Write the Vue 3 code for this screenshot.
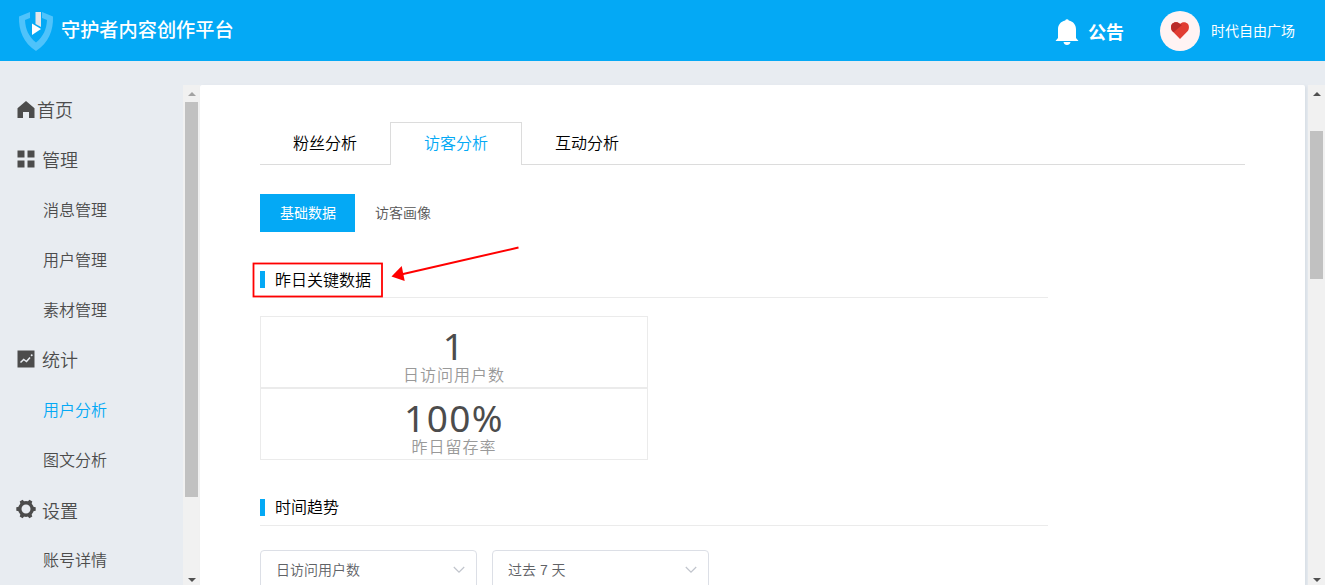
<script setup>
const menu = [
  { label: '首页', icon: 'home' },
  { label: '管理', icon: 'grid' },
  { label: '消息管理' },
  { label: '用户管理' },
  { label: '素材管理' },
  { label: '统计', icon: 'chart' },
  { label: '用户分析', active: true },
  { label: '图文分析' },
  { label: '设置', icon: 'gear' },
  { label: '账号详情' },
]
const tabs = ['粉丝分析', '访客分析', '互动分析']
const stats = [
  { value: '1', label: '日访问用户数' },
  { value: '100%', label: '昨日留存率' },
]
const selects = ['日访问用户数', '过去 7 天']
</script>

<template>
  <div class="page">
    <header class="header">
      <svg class="logo" width="36" height="42" viewBox="0 0 36 42">
        <path fill="#4fc3fb" d="M1 6.500 12 2v6L7 10c.4 9 3.600 16.500 11 22.500C25.400 26.500 28.600 19 29 10l-5-2V2l11 4.500c.5 14-4.500 26.500-17 34.500C5.500 33 .5 20.500 1 6.500z" />
        <path fill="#e3e6ea" d="M17.500 2h5.500v15l-5.500-3z" />
        <path fill="#fff" d="M14 13.500 23 19l-9 6z" />
      </svg>
      <h1 class="title">守护者内容创作平台</h1>
      <div class="notice">
        <svg width="24" height="28" viewBox="0 0 24 28">
          <path fill="#fff" d="M10.200 2.500a1.900 1.900 0 0 1 3.600 0C18.500 3.500 21 7 21 11.500V20l2.500 3H.5L3 20v-8.500C3 7 5.500 3.500 10.200 2.500zM8.500 24h7c-.3 2-1.700 3-3.500 3s-3.200-1-3.500-3z" />
        </svg>
        <span>公告</span>
      </div>
      <div class="avatar">
        <svg width="18" height="17" viewBox="0 0 18 17">
          <path fill="#e13c32" d="M9 17 1.200 9C-.3 7.200-.3 3.500 1.200 1.800 3-.3 7-.5 9 2c2-2.500 6-2.300 7.800-.2 1.500 1.700 1.500 5.400 0 7.200z" />
          <path fill="#b92a29" d="M1.200 9C-.3 7.200-.3 3.500 1.200 1.800 3-.3 7-.5 9 2l2 1-7 6-1.500 1.300z" />
        </svg>
      </div>
      <span class="user">时代自由广场</span>
    </header>

    <div class="body">
      <nav class="side">
        <div v-for="m in menu" :key="m.label" class="item" :class="[m.icon ? 'group' : 'sub', m.icon, { active: m.active }]">
          <svg v-if="m.icon === 'home'" width="18" height="17" viewBox="0 0 18 17">
            <path d="M9 0 .5 7.300V17H6v-6h6v6h5.500V7.300z" />
          </svg>
          <svg v-else-if="m.icon === 'grid'" width="18" height="18" viewBox="0 0 18 18">
            <path d="M.5.500h7v7h-7zM10.500.500h7v7h-7zM.5 10.500h7v7h-7zM10.500 10.500h7v7h-7z" />
          </svg>
          <svg v-else-if="m.icon === 'chart'" width="18" height="18" viewBox="0 0 18 18">
            <path d="M.5.500h17v17H.5z" />
            <path class="line" d="m3.500 12.500 3.200-3 2.800 2L13 7.500" />
            <circle class="dot" cx="14.700" cy="5.200" r="1" />
          </svg>
          <svg v-else-if="m.icon === 'gear'" width="20" height="20" viewBox="0 0 20 20">
            <circle class="ring" cx="10" cy="10" r="6.200" />
            <path v-for="a in 6" :key="a" d="M8.300.300h3.400l.7 4.200H7.600z" :transform="`rotate(${a * 60 + 30} 10 10)`" />
          </svg>
          <span>{{ m.label }}</span>
        </div>
      </nav>
      <div class="bar side-bar">
        <i class="up faded"></i>
        <b class="thumb"></b>
        <i class="down"></i>
      </div>

      <main class="panel">
        <div class="tabs">
          <div v-for="(t, i) in tabs" :key="t" class="tab" :class="{ on: i === 1 }">{{ t }}</div>
        </div>
        <div class="subtabs">
          <div class="subtab on">基础数据</div>
          <div class="subtab">访客画像</div>
        </div>

        <section class="section first">
          <h2>昨日关键数据</h2>
          <svg class="mark" width="270" height="56" viewBox="0 0 270 56">
            <rect x="2.500" y="18.500" width="128.500" height="33" fill="none" stroke="#f00" stroke-width="1.800" />
            <path d="M267.500 2.500 150 29.500" stroke="#f00" stroke-width="2" />
            <path d="m140.500 31.500 10.200-10.500 3 15z" fill="#f00" />
          </svg>
        </section>
        <div class="stats">
          <div v-for="s in stats" :key="s.label" class="stat">
            <div class="num">{{ s.value }}</div>
            <div class="cap">{{ s.label }}</div>
          </div>
        </div>

        <section class="section second">
          <h2>时间趋势</h2>
        </section>
        <div class="selects">
          <div v-for="s in selects" :key="s" class="select">
            <span>{{ s }}</span>
            <svg width="12" height="8" viewBox="0 0 12 8"><path d="m.8 1 5.200 5.200L11.200 1" fill="none" stroke="#c0c4cc" stroke-width="1.200" /></svg>
          </div>
        </div>
      </main>

      <div class="bar main-bar">
        <i class="up"></i>
        <b class="thumb"></b>
        <i class="down"></i>
      </div>
    </div>
  </div>
</template>

<style>
html, body { margin: 0; overflow: hidden; }
</style>

<style scoped>
.page {
  width: 1325px; height: 585px; overflow: hidden;
  display: flex; flex-direction: column;
  background: #e8ecf1; color: #4c4c4c;
  font-family: "Liberation Sans", "Noto Sans CJK SC", sans-serif;
  font-weight: 350;
}
.page * { box-sizing: border-box; }
svg { display: block; flex: none; }
.header { height: 61px; flex: none; display: flex; align-items: center; background: #04a9f5; color: #fff; padding-right: 30px; }
.logo { margin-left: 18px; }
.title { margin: 0 0 0 7px; font-size: 19.200px; line-height: 30px; font-weight: 500; white-space: nowrap; }
.notice { margin-left: auto; display: flex; align-items: center; gap: 9px; font-size: 18px; font-weight: 700; margin-top: 2px; }
.notice span { margin-top: -2px; }
.avatar { width: 40px; height: 40px; margin-left: 36px; border-radius: 50%; background: #fff3f3; display: flex; align-items: center; justify-content: center; }
.user { margin: -2px 0 0 11px; font-size: 14px; font-weight: 400; white-space: nowrap; }

.body { flex: 1; min-height: 0; display: flex; padding-top: 24px; }
.side { width: 183px; flex: none; overflow: hidden; }
.item { height: 50px; display: flex; align-items: center; white-space: nowrap; }
.item svg { fill: #4c4c4c; margin-top: -2px; }
.item span { margin-top: -2px; }
.group { font-size: 18px; padding-left: 17px; gap: 7px; }
.home { gap: 2px; }
.gear { padding-left: 16px; gap: 6px; }
.gear span { margin-top: 0; }
.sub { font-size: 16px; padding-left: 43px; }
.active { color: #04a9f5; }
.line { fill: none; stroke: #e8ecf1; stroke-width: 1.500; }
.dot { fill: #e8ecf1; }
.ring { fill: none; stroke: #4c4c4c; stroke-width: 3.400; }

.bar { width: 17px; flex: none; background: #f1f1f1; display: flex; flex-direction: column; align-items: center; }
.up, .down { width: 0; height: 0; border: 4px solid transparent; flex: none; }
.up { border-top: 0; border-bottom-color: #505050; }
.down { border-bottom: 0; border-top-color: #505050; margin-top: auto; margin-bottom: 3px; }
.up { margin-top: 7px; }
.faded { border-bottom-color: #a3a3a3; }
.thumb { width: 13px; flex: none; background: #c1c1c1; }
.side-bar .thumb { height: 395px; margin-top: 6px; }
.main-bar { margin-left: 3px; }
.main-bar .thumb { height: 148px; margin-top: 35px; }

.panel { width: 1105px; flex: none; overflow: hidden; background: #fff; border-radius: 2px 2px 0 0; padding: 37px 60px 0; box-shadow: 2px 1px 3px #d8dfe6; }
.tabs { height: 43px; display: flex; border-bottom: 1px solid #dcdcdc; }
.tab { height: 43px; width: 130px; line-height: 44px; text-align: center; font-size: 16px; color: #000; }
.tab.on { width: 132px; border: 1px solid #dcdcdc; border-bottom: 0; background: #fff; color: #04a9f5; line-height: 42px; }
.subtabs { display: flex; margin-top: 29px; }
.subtab { height: 38px; line-height: 38px; padding: 0 20px; font-size: 14px; color: #555; }
.subtab.on { width: 95px; padding: 0 0 0 20px; background: #04a9f5; color: #fff; font-weight: 400; }
.section { width: 788px; position: relative; border-bottom: 1px solid #ebebeb; }
.section h2 { margin: 0; height: 17px; line-height: 17px; border-left: 5px solid #04a9f5; padding-left: 10px; font-size: 16px; font-weight: 350; color: #000; }
.first { height: 27px; margin-top: 39px; }
.first h2 { line-height: 19px; }
.second { height: 27px; margin-top: 39px; }
.mark { position: absolute; left: -9px; top: -26px; }
.stats { width: 388px; margin-top: 18px; }
.stat { height: 72px; border: 1px solid #ebebeb; text-align: center; overflow: hidden; }
.num { font-family: "Noto Sans", "Liberation Sans", sans-serif; font-size: 37px; line-height: 36px; height: 47px; padding-top: 11px; letter-spacing: 1.400px; font-weight: 400; }
.cap { font-size: 16px; line-height: 24px; height: 24px; letter-spacing: 1px; color: #999; }
.selects { display: flex; gap: 15px; margin-top: 24px; }
.select { width: 217px; height: 40px; border: 1px solid #dcdfe6; border-radius: 4px; display: flex; align-items: center; justify-content: space-between; padding: 0 11px 0 15px; font-size: 14px; color: #606266; }
.select span { margin-top: -2px; }
</style>
